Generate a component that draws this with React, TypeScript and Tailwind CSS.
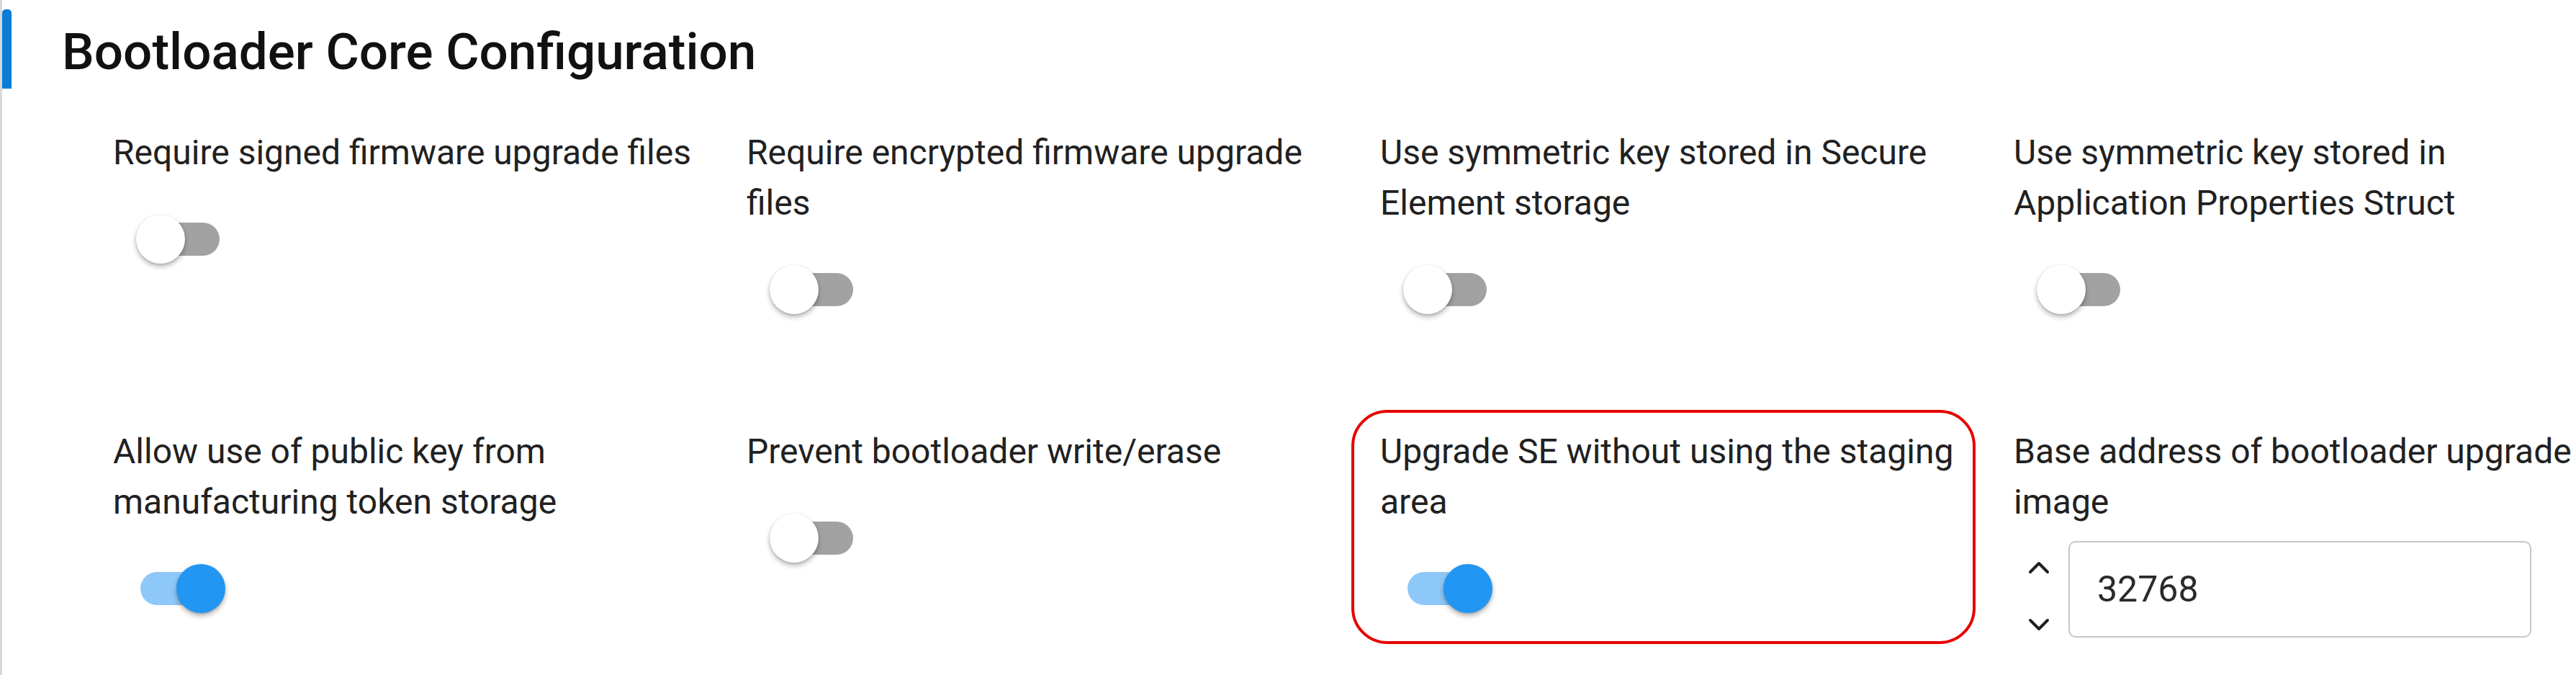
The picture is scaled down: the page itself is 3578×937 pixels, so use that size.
import React from "react";

function Toggle({ on }: { on: boolean }) {
  return (
    <div className="relative w-[160px] h-[70px] mt-[50px] shrink-0">
      <div
        className={
          "absolute left-[38px] top-[12px] w-[110px] h-[46px] rounded-full " +
          (on ? "bg-[#8ec8f8]" : "bg-[#a2a2a2]")
        }
      />
      <div
        className={
          "absolute top-[1px] w-[68px] h-[68px] rounded-full shadow-[0_4px_7px_rgba(0,0,0,0.28),0_1px_3px_rgba(0,0,0,0.15)] " +
          (on ? "left-[88px] bg-[#2196f3]" : "left-[32px] bg-white")
        }
      />
    </div>
  );
}

function Label({ children }: { children: React.ReactNode }) {
  return (
    <p className="text-[48px] leading-[70px] text-[#212121] pr-[55px]">
      {children}
    </p>
  );
}

function ToggleCell({
  label,
  on,
  highlight,
}: {
  label: string;
  on: boolean;
  highlight?: boolean;
}) {
  return (
    <div className="relative flex flex-col">
      {highlight && (
        <div className="absolute -left-[40px] -top-[23px] w-[867px] h-[325px] border-4 border-[#e80000] rounded-[50px] pointer-events-none" />
      )}
      <Label>{label}</Label>
      <Toggle on={on} />
    </div>
  );
}

function Chevron({ up }: { up: boolean }) {
  return (
    <svg width="30" height="19" viewBox="0 0 30 19" fill="none">
      <polyline
        points={up ? "3,16 15,4 27,16" : "3,3 15,15 27,3"}
        stroke="#1f1f1f"
        strokeWidth="4"
        strokeLinecap="round"
        strokeLinejoin="round"
      />
    </svg>
  );
}

function NumberCell() {
  return (
    <div className="flex flex-col">
      <Label>Base address of bootloader upgrade image</Label>
      <div className="flex items-start mt-[19px]">
        <div className="flex flex-col ml-[20px] pt-[27px] gap-[61px]">
          <Chevron up />
          <Chevron up={false} />
        </div>
        <div className="ml-[26px] w-[643px] h-[134px] border-2 border-[#c6c6c6] rounded-[10px] flex items-center pl-[38px] text-[50px] text-[#2a2a2a]">
          32768
        </div>
      </div>
    </div>
  );
}

export default function App() {
  return (
    <div className="w-full h-[937px] overflow-hidden bg-white [font-family:Roboto,'Noto_Sans',sans-serif]">
      <div className="border-l-[3px] border-[#d8d8d8] pt-[13px] h-[937px]">
        <div className="flex items-start">
          <div className="w-[13px] h-[110px] rounded-t-[5px] bg-[#0b7dd6] shrink-0" />
          <h1 className="ml-[70px] mt-[17px] text-[71px] leading-[83px] font-medium text-[#111] whitespace-nowrap">
            Bootloader Core Configuration
          </h1>
        </div>
        <div className="mt-[54px] pl-[154px] grid grid-cols-[repeat(4,880px)] gap-y-[155px] w-max">
          <ToggleCell label="Require signed firmware upgrade files" on={false} />
          <ToggleCell label="Require encrypted firmware upgrade files" on={false} />
          <ToggleCell label="Use symmetric key stored in Secure Element storage" on={false} />
          <ToggleCell label="Use symmetric key stored in Application Properties Struct" on={false} />
          <ToggleCell label="Allow use of public key from manufacturing token storage" on={true} />
          <ToggleCell label="Prevent bootloader write/erase" on={false} />
          <ToggleCell label="Upgrade SE without using the staging area" on={true} highlight />
          <NumberCell />
        </div>
      </div>
    </div>
  );
}
